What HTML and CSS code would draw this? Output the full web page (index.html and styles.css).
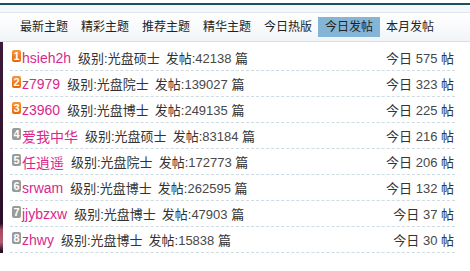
FILE: index.html
```html
<!DOCTYPE html>
<html>

<head>
  <title>今日发帖</title>
  <link rel="stylesheet" href="styles.css">
</head>

<body>
  <div class='topLine'></div>

  <div class='tabBar'>
    <span class='tab'>最新主题</span>
    <span class='tab'>精彩主题</span>
    <span class='tab'>推荐主题</span>
    <span class='tab'>精华主题</span>
    <span class='tab'>今日热版</span>
    <span class='tab active'>今日发帖</span>
    <span class='tab'>本月发帖</span>
  </div>

  <div class='main'>
    <div class='sideBar'></div>

    <ul class='userList'>
      <li class='row'>
        <span class='rank top'>1</span><a class='name'>hsieh2h</a>
        <span class='level'>级别:光盘硕士</span>
        <span class='posts'>发帖:<em>42138</em> 篇</span>
        <span class='today'>今日 <em>575</em> 帖</span>
      </li>
      <li class='row'>
        <span class='rank top'>2</span><a class='name'>z7979</a>
        <span class='level'>级别:光盘院士</span>
        <span class='posts'>发帖:<em>139027</em> 篇</span>
        <span class='today'>今日 <em>323</em> 帖</span>
      </li>
      <li class='row'>
        <span class='rank top'>3</span><a class='name'>z3960</a>
        <span class='level'>级别:光盘博士</span>
        <span class='posts'>发帖:<em>249135</em> 篇</span>
        <span class='today'>今日 <em>225</em> 帖</span>
      </li>
      <li class='row'>
        <span class='rank'>4</span><a class='name'>爱我中华</a>
        <span class='level'>级别:光盘硕士</span>
        <span class='posts'>发帖:<em>83184</em> 篇</span>
        <span class='today'>今日 <em>216</em> 帖</span>
      </li>
      <li class='row'>
        <span class='rank'>5</span><a class='name'>任逍遥</a>
        <span class='level'>级别:光盘院士</span>
        <span class='posts'>发帖:<em>172773</em> 篇</span>
        <span class='today'>今日 <em>206</em> 帖</span>
      </li>
      <li class='row'>
        <span class='rank'>6</span><a class='name'>srwam</a>
        <span class='level'>级别:光盘博士</span>
        <span class='posts'>发帖:<em>262595</em> 篇</span>
        <span class='today'>今日 <em>132</em> 帖</span>
      </li>
      <li class='row'>
        <span class='rank'>7</span><a class='name'>jjybzxw</a>
        <span class='level'>级别:光盘博士</span>
        <span class='posts'>发帖:<em>47903</em> 篇</span>
        <span class='today'>今日 <em>37</em> 帖</span>
      </li>
      <li class='row'>
        <span class='rank'>8</span><a class='name'>zhwy</a>
        <span class='level'>级别:光盘博士</span>
        <span class='posts'>发帖:<em>15838</em> 篇</span>
        <span class='today'>今日 <em>30</em> 帖</span>
      </li>
    </ul>
  </div>
</body>

</html>
```

FILE: styles.css
```css
body {
  margin: 0;
  background: #ffffff;
  color: #333333;
  font: 13px "Liberation Sans", "Noto Sans CJK SC", sans-serif;
}

.topLine {
  margin-top: 3px;
  height: 2px;
  background: #1f4d63;
  border-bottom: 7px solid #f4f8fb;
}

.tabBar {
  display: flex;
  align-items: center;
  height: 28px;
  padding-left: 13px;
  border-top: 1px solid #dfe7ec;
  border-bottom: 1px solid #d6dfe5;
  background: linear-gradient(#ffffff, #f1f5f8);
  font-size: 12px;
  color: #222222;
}

.tab {
  padding: 2px 7px 3px;
  margin-right: -1px;
  line-height: 14px;
}

.tab.active {
  padding-top: 3px;
  padding-bottom: 3px;
  background: #84b5d6;
}

.main {
  display: flex;
  padding-bottom: 9px;
}

.sideBar {
  width: 3px;
  background: linear-gradient(#3d1b38 0%, #2a0e27 86%, #a54a63 89%, #b25a70 95%, #2a0e27 99%);
}

.userList {
  list-style: none;
  margin: 3px 0 0 7px;
  padding: 0;
  width: 445px;
}

.row {
  display: flex;
  align-items: center;
  height: 25px;
  padding-left: 2px;
  border-bottom: 1px dashed #cddbe3;
}

.row em {
  font-style: normal;
  color: #484848;
}

.rank {
  display: inline-block;
  width: 9px;
  height: 12px;
  margin-top: -3px;
  border-radius: 2px;
  background: #9a9a9a;
  color: #ffffff;
  font: bold 11px/12px "Liberation Sans", sans-serif;
  text-align: center;
}

.rank.top {
  background: linear-gradient(#f7953a, #e8660b);
}

.name {
  margin-left: 1px;
  color: #d9288c;
  font-size: 14px;
}

.level {
  margin-left: 7px;
}

.posts {
  margin-left: 6px;
}

.today {
  margin-left: auto;
  padding-right: 1px;
}
```
